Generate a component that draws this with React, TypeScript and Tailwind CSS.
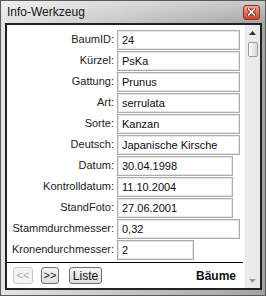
import React from "react";

type Row = { label: string; value: string; box: string };

const ROWS: Row[] = [
  { label: "BaumID:", value: "24", box: "w-[123px]" },
  { label: "Kürzel:", value: "PsKa", box: "w-[123px]" },
  { label: "Gattung:", value: "Prunus", box: "w-[123px]" },
  { label: "Art:", value: "serrulata", box: "w-[123px]" },
  { label: "Sorte:", value: "Kanzan", box: "w-[123px]" },
  { label: "Deutsch:", value: "Japanische Kirsche", box: "w-[123px]" },
  { label: "Datum:", value: "30.04.1998", box: "w-[116px]" },
  { label: "Kontrolldatum:", value: "11.10.2004", box: "w-[116px]" },
  { label: "StandFoto:", value: "27.06.2001", box: "w-[116px]" },
  { label: "Stammdurchmesser:", value: "0,32", box: "w-[123px]" },
  { label: "Kronendurchmesser:", value: "2", box: "w-[77px]" },
];

function FieldRow({ row }: { row: Row }) {
  return (
    <div className="flex h-[21px] items-start">
      <div className="w-[107px] pt-[2px] text-right leading-[14px] text-[#1b1b1b]">{row.label}</div>
      <div
        className={`ml-[3px] flex h-[20px] items-center border border-[#acacac] bg-white pl-[4px] shadow-[inset_0_0_0_1px_#e6e6e6] ${row.box}`}
      >
        <span className="leading-[14px] text-[#0a0a14]">{row.value}</span>
      </div>
    </div>
  );
}

function NavButton({ label, disabled, className }: { label: string; disabled?: boolean; className: string }) {
  return (
    <button
      type="button"
      className={`flex h-[17px] items-center justify-center rounded-[3px] border text-[11px] leading-none ${
        disabled
          ? "border-[#c8c8c8] bg-[#f4f4f4] text-[#a8a8a8]"
          : "border-[#707070] bg-gradient-to-b from-[#f6f6f6] to-[#dcdcdc] text-[#111]"
      } ${className}`}
    >
      {label}
    </button>
  );
}

export default function App() {
  return (
    <div
      className="flex h-[296px] w-[266px] flex-col border border-[#5a5a5a] bg-gradient-to-r from-[#e4e4e4] to-[#a4a4a4] text-[11px]"
      style={{ fontFamily: '"Liberation Sans", Arial, sans-serif' }}
    >
      {/* title bar */}
      <div className="flex h-[22px] items-center justify-between bg-gradient-to-b from-white/40 to-transparent pl-[6px] pr-[5px]">
        <span className="text-[12px] text-[#151515]">Info-Werkzeug</span>
        <div className="flex h-[15px] w-[17px] items-center justify-center rounded-[3px] border border-[#8a3322] bg-gradient-to-b from-[#f1a48c] via-[#e0735a] to-[#c9452c]">
          <svg width="9" height="8" viewBox="0 0 9 8">
            <path d="M1.5 1 L7.5 7 M7.5 1 L1.5 7" stroke="#5a1e12" strokeWidth="3.2" strokeLinecap="square" />
            <path d="M1.5 1 L7.5 7 M7.5 1 L1.5 7" stroke="#ffffff" strokeWidth="1.6" strokeLinecap="square" />
          </svg>
        </div>
      </div>

      {/* client */}
      <div className="flex flex-1 flex-col pb-[5px] pl-[4px] pr-[3px]">
        <div className="flex flex-1 border-2 border-[#222]">
          <div className="flex flex-1 flex-col bg-white">
            <div className="flex flex-col pt-[5px]">
              {ROWS.map((r) => (
                <FieldRow key={r.label} row={r} />
              ))}
            </div>
            <div className="mt-[1px] h-[1px] w-[236px] bg-black" />
            <div className="flex flex-1 items-start pt-[4px]">
              <NavButton label="<<" disabled className="ml-[6px] w-[20px]" />
              <NavButton label=">>" className="ml-[8px] w-[18px]" />
              <NavButton label="Liste" className="ml-[10px] w-[33px] text-[12px]" />
              <span className="ml-auto mr-[8px] pt-[3px] text-[12px] font-bold leading-none text-[#111]">Bäume</span>
            </div>
          </div>

          {/* scrollbar */}
          <div className="flex w-[16px] flex-col items-center border-l border-[#f8f8f8] bg-[#ebebeb]">
            <svg width="7" height="4" viewBox="0 0 7 4" className="mt-[6px]">
              <path d="M3.5 0 L7 4 L0 4 Z" fill="#303030" />
            </svg>
            <div className="mt-[7px] h-[15px] w-[10px] rounded-[2px] border border-[#9c9c9c] bg-gradient-to-r from-[#fdfdfd] to-[#d8d8d8]" />
            <div className="flex-1" />
            <svg width="7" height="4" viewBox="0 0 7 4" className="mb-[5px]">
              <path d="M0 0 L7 0 L3.5 4 Z" fill="#9a9a9a" />
            </svg>
          </div>
        </div>
      </div>
    </div>
  );
}
